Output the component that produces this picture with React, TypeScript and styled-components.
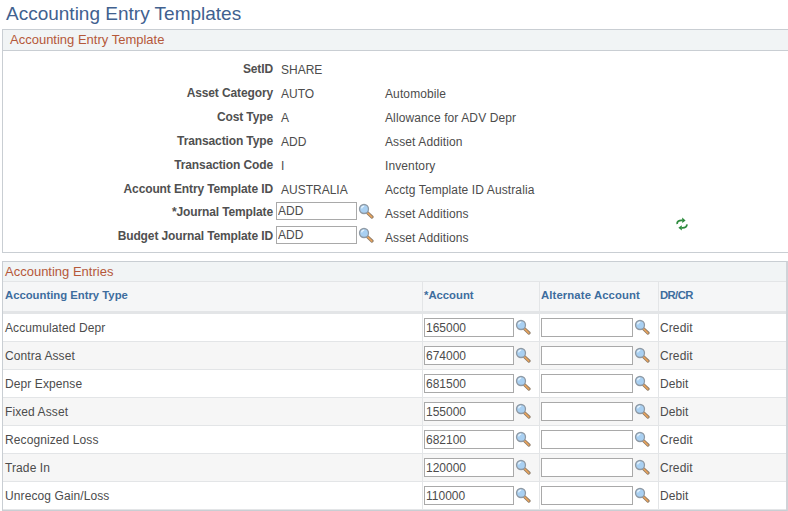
import styled, { createGlobalStyle } from "styled-components";

const GlobalStyle = createGlobalStyle`
  html, body {
    margin: 0;
    background: #fff;
    font-family: "Liberation Sans", Arial, sans-serif;
  }
`;

const summary = [
  { label: "SetID", value: "SHARE", desc: "" },
  { label: "Asset Category", value: "AUTO", desc: "Automobile" },
  { label: "Cost Type", value: "A", desc: "Allowance for  ADV Depr" },
  { label: "Transaction Type", value: "ADD", desc: "Asset Addition" },
  { label: "Transaction Code", value: "I", desc: "Inventory" },
  { label: "Account Entry Template ID", value: "AUSTRALIA", desc: "Acctg Template ID Australia" },
];

const entries = [
  { type: "Accumulated Depr", account: "165000", side: "Credit" },
  { type: "Contra Asset", account: "674000", side: "Credit" },
  { type: "Depr Expense", account: "681500", side: "Debit" },
  { type: "Fixed Asset", account: "155000", side: "Debit" },
  { type: "Recognized Loss", account: "682100", side: "Credit" },
  { type: "Trade In", account: "120000", side: "Credit" },
  { type: "Unrecog Gain/Loss", account: "110000", side: "Debit" },
];

function Lookup() {
  return (
    <LookupIcon viewBox="0 0 16 16" aria-hidden="true">
      <path d="M9.6 9.8 L14 14" stroke="#8c7a68" strokeWidth="3.2" strokeLinecap="round" />
      <path d="M9.8 10 L13.8 14" stroke="#eba55c" strokeWidth="1.7" strokeLinecap="round" />
      <circle cx="6" cy="6" r="4.5" fill="#a9d0f2" stroke="#8f9aa5" strokeWidth="1.3" />
      <path d="M3.6 5.4 A2.6 2.6 0 0 1 6.2 3.2" fill="none" stroke="#e6f3fd" strokeWidth="1.3" />
    </LookupIcon>
  );
}

function Refresh() {
  return (
    <RefreshIcon viewBox="0 0 14 14" aria-hidden="true">
      <path d="M2.2 7 C1.8 4.6 3.6 3.2 7.4 3.4" fill="none" stroke="#2c8a3c" strokeWidth="1.8" />
      <path d="M7.2 0.6 L10.6 3.5 L7.2 6 Z" fill="#2c8a3c" />
      <path d="M11.8 7.4 C12.2 9.8 10.4 11 6.6 10.8" fill="none" stroke="#2c8a3c" strokeWidth="1.8" />
      <path d="M6.8 8.2 L3.4 10.8 L6.8 13.6 Z" fill="#2c8a3c" />
    </RefreshIcon>
  );
}

export default function App() {
  return (
    <Page>
      <GlobalStyle />
      <Title>Accounting Entry Templates</Title>
      <TemplatePanel>
        <PanelHeader>Accounting Entry Template</PanelHeader>
        <Form>
          {summary.map((row) => (
            <FormRow key={row.label}>
              <Label>{row.label}</Label>
              <Value>{row.value}</Value>
              <Desc>{row.desc}</Desc>
            </FormRow>
          ))}
          <FormRow>
            <InputLabel>*Journal Template</InputLabel>
            <InputCell>
              <TemplateInput readOnly value="ADD" />
              <Lookup />
            </InputCell>
            <Desc>Asset Additions</Desc>
          </FormRow>
          <FormRow>
            <InputLabel>Budget Journal Template ID</InputLabel>
            <InputCell>
              <TemplateInput readOnly value="ADD" />
              <Lookup />
            </InputCell>
            <Desc>Asset Additions</Desc>
          </FormRow>
          <RefreshSlot>
            <Refresh />
          </RefreshSlot>
        </Form>
      </TemplatePanel>
      <EntriesPanel>
        <EntriesHeader>Accounting Entries</EntriesHeader>
        <ColumnRow>
          <ColumnHead>Accounting Entry Type</ColumnHead>
          <ColumnHead>*Account</ColumnHead>
          <ColumnHead>Alternate Account</ColumnHead>
          <ColumnHead>DR/CR</ColumnHead>
        </ColumnRow>
        {entries.map((entry, i) => (
          <EntryRow key={entry.type} $shaded={i % 2 === 1}>
            <Cell>{entry.type}</Cell>
            <Cell>
              <AccountInput readOnly value={entry.account} />
              <Lookup />
            </Cell>
            <Cell>
              <AltInput readOnly value="" />
              <Lookup />
            </Cell>
            <Cell>{entry.side}</Cell>
          </EntryRow>
        ))}
      </EntriesPanel>
    </Page>
  );
}

const Page = styled.div`
  width: 788px;
  height: 511px;
  overflow: hidden;
  box-sizing: border-box;
  padding: 0 0 0 2px;
  font-size: 12px;
  color: #4c4c4c;
`;

const Title = styled.h1`
  margin: 0 0 0 4px;
  height: 29px;
  font-size: 19px;
  font-weight: normal;
  line-height: 27px;
  color: #41618f;
`;

const TemplatePanel = styled.section`
  box-sizing: border-box;
  width: 786px;
  height: 224px;
  border: 1px solid #c9ced3;
  border-right: none;
`;

const PanelHeader = styled.div`
  box-sizing: border-box;
  height: 21px;
  padding-left: 7px;
  background: #f1f4f5;
  border-bottom: 1px solid #c9ced3;
  font-size: 13px;
  line-height: 19px;
  color: #b5583a;
`;

const Form = styled.div`
  position: relative;
  padding-top: 7px;
`;

const FormRow = styled.div`
  display: grid;
  grid-template-columns: 270px 104px 1fr;
  height: 24px;
  align-items: center;
`;

const Label = styled.label`
  font-weight: bold;
  letter-spacing: -0.12px;
  text-align: right;
  color: #505050;
  position: relative;
  top: -1px;
`;

const InputLabel = styled(Label)`
  top: -2px;
`;

const Value = styled.span`
  padding-left: 8px;
`;

const Desc = styled.span`
  padding-left: 8px;
  letter-spacing: 0.11px;
`;

const LookupIcon = styled.svg`
  width: 16px;
  height: 16px;
  flex: none;
  position: relative;
  top: -1px;
`;

const InputCell = styled.span`
  display: flex;
  align-items: center;
  padding-left: 3px;
  gap: 1px;
  position: relative;
  top: -3px;
  ${LookupIcon} {
    top: 0;
  }
`;

const BaseInput = styled.input`
  box-sizing: border-box;
  height: 19px;
  margin: 0;
  padding: 0 1px;
  border: 1px solid #a9a9a9;
  background: #fff;
  font: 12px "Liberation Sans", Arial, sans-serif;
  color: #4c4c4c;
  outline: none;
`;

const TemplateInput = styled(BaseInput)`
  width: 81px;
  height: 18px;
`;

const RefreshSlot = styled.span`
  position: absolute;
  left: 672px;
  top: 166px;
  display: flex;
`;

const RefreshIcon = styled.svg`
  width: 14px;
  height: 14px;
`;

const EntriesPanel = styled.section`
  box-sizing: border-box;
  width: 786px;
  height: 250px;
  margin-top: 8px;
  border: 1px solid #c9ced3;
  border-right: 2px solid #d0d3d8;
`;

const EntriesHeader = styled.div`
  height: 19px;
  padding-left: 2px;
  background: #f1f4f5;
  font-size: 13px;
  line-height: 19px;
  color: #b5583a;
`;

const columns = "420px 117px 119px 1fr";

const ColumnRow = styled.div`
  display: grid;
  grid-template-columns: ${columns};
  box-sizing: border-box;
  height: 33px;
  background: #f5f6f7;
  border-top: 1px solid #e3e5e7;
  border-bottom: 3px solid #e3e5e7;
`;

const ColumnHead = styled.div`
  box-sizing: border-box;
  padding-left: 1px;
  line-height: 27px;
  font-size: 11.3px;
  font-weight: bold;
  color: #3d6d9e;
  border-right: 1px solid #e3e5e7;
  &:first-child {
    padding-left: 2px;
  }
  &:nth-child(3) {
    letter-spacing: 0.12px;
  }
  &:last-child {
    border-right: none;
    letter-spacing: -0.6px;
  }
`;

const EntryRow = styled.div<{ $shaded: boolean }>`
  display: grid;
  grid-template-columns: ${columns};
  box-sizing: border-box;
  height: 28px;
  background: ${(props) => (props.$shaded ? "#f6f6f6" : "#fff")};
  border-bottom: 1px solid #e3e5e7;
`;

const Cell = styled.div`
  display: flex;
  align-items: center;
  box-sizing: border-box;
  padding-left: 1px;
  gap: 1px;
  letter-spacing: 0.1px;
  border-right: 1px solid #e3e5e7;
  &:first-child {
    padding-left: 2px;
  }
  &:last-child {
    border-right: none;
  }
`;

const AccountInput = styled(BaseInput)`
  width: 90px;
`;

const AltInput = styled(BaseInput)`
  width: 92px;
`;
